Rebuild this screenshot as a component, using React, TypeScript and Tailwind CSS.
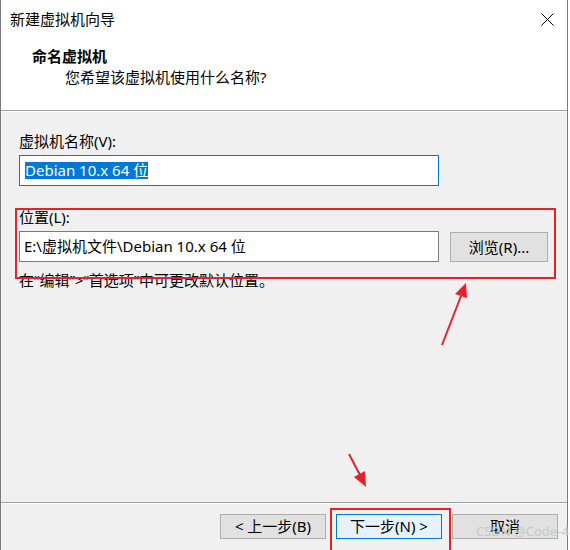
import React from 'react';

const font = {
  fontFamily: '"Noto Sans", "Noto Sans CJK SC", sans-serif',
};

const WizardButton = ({
  label,
  primary,
}: {
  label: string;
  primary?: boolean;
}) => (
  <div
    className={
      'w-[106px] h-[25px] flex items-center justify-center text-[15px] leading-none text-black border ' +
      (primary ? 'bg-[#e5f1fb] border-[#0078d7]' : 'bg-[#e1e1e1] border-[#adadad]')
    }
  >
    {label}
  </div>
);

const App = () => {
  return (
    <div className="w-[570px] h-[550px] bg-white relative overflow-hidden" style={font}>
      <div className="w-[568px] h-full flex flex-col bg-[#f0f0f0] border-l border-r border-[#7a7a7a]">
        {/* header */}
        <div className="h-[111px] bg-white border-b border-[#a0a0a0] flex flex-col shrink-0">
          <div className="h-[38px] flex items-center justify-between pl-[9px] pr-[13px]">
            <span className="text-[15px] text-black">新建虚拟机向导</span>
            <svg width="13" height="13" viewBox="0 0 13 13">
              <path d="M0.5 0.5 L12.5 12.5 M12.5 0.5 L0.5 12.5" stroke="#000" strokeWidth="1" />
            </svg>
          </div>
          <div className="pl-[31px] mt-[8px] text-[15px] leading-[20px] font-bold text-black">命名虚拟机</div>
          <div className="pl-[64px] mt-[1px] text-[15px] leading-[20px] text-black">您希望该虚拟机使用什么名称?</div>
        </div>
        <div className="h-px bg-white shrink-0" />

        {/* body */}
        <div className="flex-1 flex flex-col pl-[18px] pt-[19px] text-[15px] text-black">
          <div className="leading-[20px]">虚拟机名称(V):</div>
          <div className="mt-[4px] w-[420px] h-[31px] bg-white border border-[#0078d7] flex items-center pl-[5px]">
            <span className="bg-[#0078d7] text-white leading-[17px]">Debian 10.x 64 位</span>
          </div>

          <div className="mt-[21px] leading-[20px]">位置(L):</div>
          <div className="mt-[4px] flex items-start">
            <div className="w-[420px] h-[31px] bg-white border border-[#7a7a7a] flex items-center pl-[4px]">
              E:\虚拟机文件\Debian 10.x 64 位
            </div>
            <div className="ml-[11px] mt-[1px] w-[98px] h-[30px] bg-[#e1e1e1] border border-[#adadad] flex items-center justify-center">
              浏览(R)...
            </div>
          </div>
          <div className="mt-[8px] leading-[20px]">在“编辑”&gt;“首选项”中可更改默认位置。</div>
        </div>

        {/* footer */}
        <div className="h-[48px] shrink-0 border-t border-[#a0a0a0] flex flex-col">
          <div className="h-px bg-white" />
          <div className="flex justify-end gap-[10px] pr-[9px] pt-[10px]">
            <WizardButton label="< 上一步(B)" />
            <WizardButton label="下一步(N) >" primary />
            <WizardButton label="取消" />
          </div>
        </div>
      </div>

      {/* annotations */}
      <div className="absolute left-[15px] top-[208px] w-[541px] h-[71px] border-2 border-[#e8202a] pointer-events-none" />
      <div className="absolute left-[330px] top-[508px] w-[121px] h-[50px] border-2 border-[#e8202a] pointer-events-none" />
      <svg className="absolute left-0 top-0 pointer-events-none" width="570" height="550">
        <line x1="442" y1="345" x2="461" y2="296" stroke="#e8202a" strokeWidth="2" />
        <polygon points="466,283 455,294 467,298" fill="#e8202a" />
        <line x1="349" y1="454" x2="360" y2="475" stroke="#e8202a" strokeWidth="2" />
        <polygon points="366,487 354,477 365,471" fill="#e8202a" />
      </svg>
      <div className="absolute left-[476px] top-[523px] text-[13px] leading-[16px] text-[#c8c8c8] pointer-events-none">
        CSDN @Code-4
      </div>
    </div>
  );
};

export default App;
